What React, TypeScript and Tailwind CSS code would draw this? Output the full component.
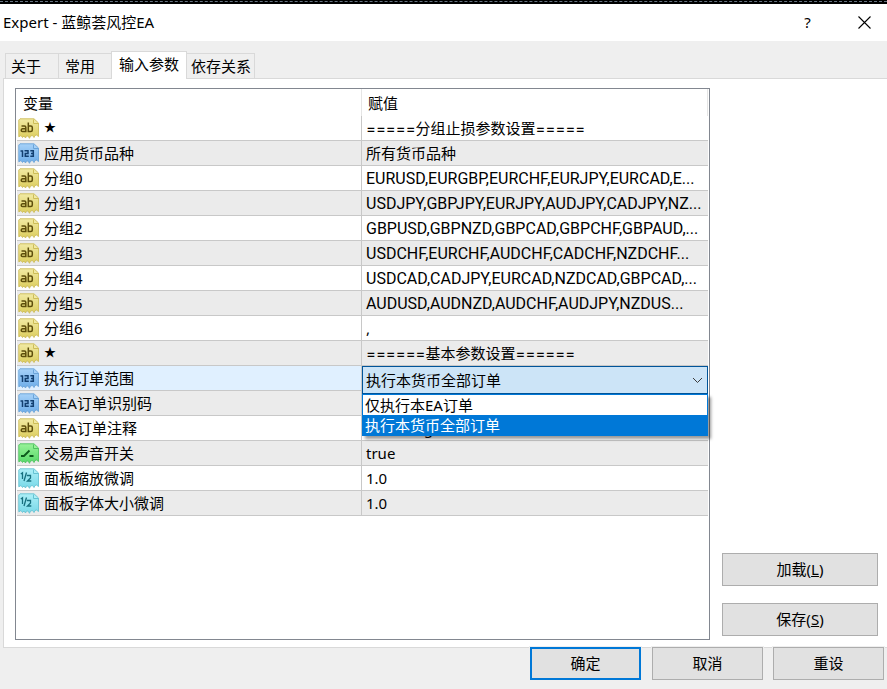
import { useState } from "react";

type Kind = "text" | "int" | "bool" | "real";

interface Param {
  kind: Kind;
  name: string;
  value: string;
}

const params: Param[] = [
  { kind: "text", name: "★", value: "=====分组止损参数设置=====" },
  { kind: "int", name: "应用货币品种", value: "所有货币品种" },
  { kind: "text", name: "分组0", value: "EURUSD,EURGBP,EURCHF,EURJPY,EURCAD,E..." },
  { kind: "text", name: "分组1", value: "USDJPY,GBPJPY,EURJPY,AUDJPY,CADJPY,NZ..." },
  { kind: "text", name: "分组2", value: "GBPUSD,GBPNZD,GBPCAD,GBPCHF,GBPAUD,..." },
  { kind: "text", name: "分组3", value: "USDCHF,EURCHF,AUDCHF,CADCHF,NZDCHF..." },
  { kind: "text", name: "分组4", value: "USDCAD,CADJPY,EURCAD,NZDCAD,GBPCAD,..." },
  { kind: "text", name: "分组5", value: "AUDUSD,AUDNZD,AUDCHF,AUDJPY,NZDUS..." },
  { kind: "text", name: "分组6", value: "," },
  { kind: "text", name: "★", value: "======基本参数设置======" },
  { kind: "int", name: "执行订单范围", value: "执行本货币全部订单" },
  { kind: "int", name: "本EA订单识别码", value: "" },
  { kind: "text", name: "本EA订单注释", value: "Blue King" },
  { kind: "bool", name: "交易声音开关", value: "true" },
  { kind: "real", name: "面板缩放微调", value: "1.0" },
  { kind: "real", name: "面板字体大小微调", value: "1.0" },
];

const scopes = ["仅执行本EA订单", "执行本货币全部订单"];

const palette: Record<Kind, { top: string; base: string; edge: string; ink: string }> = {
  text: { top: "#f1eaa4", base: "#dccd5c", edge: "#cdbc58", ink: "#5d4e0c" },
  int: { top: "#a6d1f8", base: "#6cace8", edge: "#6ba4d8", ink: "#123f70" },
  bool: { top: "#98f298", base: "#55d868", edge: "#4fc260", ink: "#0c5a1c" },
  real: { top: "#adeff7", base: "#77d8e8", edge: "#66c2d2", ink: "#17707f" },
};

function TypeIcon({ kind }: { kind: Kind }) {
  const c = palette[kind];
  return (
    <svg width="21" height="21" viewBox="0 0 21 21" className="block shrink-0" aria-hidden="true">
      <defs>
        <linearGradient id={`fill-${kind}`} x1="0" y1="0" x2="0" y2="1">
          <stop offset="0" stopColor={c.top} />
          <stop offset="1" stopColor={c.base} />
        </linearGradient>
      </defs>
      <path
        d="M2 .8H16L20.500 5V18.500L18.500 17L17 17.500L16 19.500L14.500 17.500L12.500 18L11.500 20.300L10 18L8.500 18L7.500 20L6 18L4.500 19.500L3 17.500L.8 18.800V2Z"
        fill={`url(#fill-${kind})`}
        stroke={c.edge}
        strokeWidth=".9"
      />
      <path d="M15.500 1.500V5.500H20" fill={c.top} stroke={c.edge} />
      {kind === "text" && (
        <g fill="none" stroke={c.ink} strokeWidth="1.500">
          <path d="M3.500 8H6.500Q7.800 8 7.800 9.200V13.500H4.500Q3.200 13.500 3.200 12.200T4.500 10.700H7.800" />
          <path d="M10.300 4.500V13.500H12.800Q14.300 13.500 14.300 12V9.500Q14.300 8 12.800 8H10.300" />
        </g>
      )}
      {kind === "int" && (
        <g fill="none" stroke={c.ink} strokeWidth="1.500">
          <path d="M2.500 8H4.500V14" />
          <path d="M6.500 7.800H10V10.500H7.300V13.300H10.800" />
          <path d="M12.300 7.800H15.300V13.300H12.300M13 10.500H15.300" />
        </g>
      )}
      {kind === "bool" && <path d="M3 13H6L11.500 7.500M11.500 13H15.500" fill="none" stroke={c.ink} strokeWidth="1.800" />}
      {kind === "real" && (
        <g fill="none" stroke={c.ink} strokeWidth="1.300">
          <path d="M2.800 6L4.500 4.800V11M8.500 4.500L6 13" />
          <path d="M8.800 7.500H12.500V10L9.500 13H13.300" />
        </g>
      )}
    </svg>
  );
}

function ScopeBox() {
  const [scope, setScope] = useState(scopes[1]);
  return (
    <div className="absolute inset-x-0 top-0 z-10">
      <div className="relative">
        <select
          aria-label="执行订单范围"
          value={scope}
          onChange={(e) => setScope(e.target.value)}
          className="block h-7 w-full appearance-none border border-[#005499] bg-[#cce4f7] pl-[3px] outline-none"
        >
          {scopes.map((s) => (
            <option key={s}>{s}</option>
          ))}
        </select>
        <svg width="11" height="7" viewBox="0 0 11 7" className="pointer-events-none absolute top-[11px] right-[5px]" aria-hidden="true">
          <path d="M1 1L5.500 5.500L10 1" fill="none" stroke="#3c3c3c" />
        </svg>
      </div>
      <ul role="listbox" aria-label="执行订单范围" className="border border-[#0078d7] bg-white shadow-[3px_3px_3px_rgba(0,0,0,0.4)]">
        {scopes.map((s) => (
          <li
            key={s}
            role="option"
            aria-selected={s === scope}
            onClick={() => setScope(s)}
            className="h-5 pl-0.5 leading-5 aria-selected:bg-[#0078d7] aria-selected:text-white"
          >
            {s}
          </li>
        ))}
      </ul>
    </div>
  );
}

function valueFont(value: string) {
  if (value.startsWith("=")) return "font-['Inter','Noto_Sans_CJK_SC',sans-serif] leading-[26px]";
  if (value.includes("...")) return "font-['Roboto',sans-serif] text-base leading-[26px]";
  return "leading-6";
}

function Row({ param, index }: { param: Param; index: number }) {
  const active = index === 10;
  const shade = index % 2 === 1 ? "bg-[#ebebeb]" : "bg-white";
  return (
    <tr className={shade}>
      <td className={`h-[25px] border-r border-b border-[#c8c8c8] p-0 ${active ? "bg-[#e0f0ff]" : ""}`}>
        <div className="flex h-6 items-center gap-[5px] pl-px">
          <TypeIcon kind={param.kind} />
          <span className={param.name === "★" ? "text-xs" : ""}>{param.name}</span>
        </div>
      </td>
      <td className="relative border-b border-[#c8c8c8] p-0">
        {active ? (
          <ScopeBox />
        ) : (
          <div className={`h-6 overflow-hidden pl-1 whitespace-nowrap ${valueFont(param.value)}`}>{param.value}</div>
        )}
      </td>
    </tr>
  );
}

const tabs = ["关于", "常用", "输入参数", "依存关系"];
const button = "h-[33px] border border-[#adadad] bg-[#e1e1e1] pb-0.5";

export default function App() {
  return (
    <div className="flex min-h-screen flex-col bg-[#efefef] font-['Noto_Sans','Noto_Sans_CJK_SC',sans-serif] text-[15px] leading-6 text-black">
      <div className="h-1 bg-black pt-px">
        <div className="border-t border-dashed border-[#687482]" />
      </div>
      <header className="flex h-[37px] items-center bg-white pb-0.5 pl-[3px]">
        <h1 className="flex-1">Expert - 蓝鲸荟风控EA</h1>
        <button aria-label="帮助" className="h-full w-[57px] pl-3">?</button>
        <button aria-label="关闭" className="flex h-full w-[57px] items-center justify-center pt-0.5 pl-3">
          <svg width="13" height="13" viewBox="0 0 13 13" aria-hidden="true">
            <path d="M.5 .5L12.500 12.500M12.500 .5L.5 12.500" stroke="#000" strokeWidth="1.100" />
          </svg>
        </button>
      </header>

      <nav role="tablist" className="z-10 -mb-px flex h-[38px] items-end pl-[5px]">
        {tabs.map((t, i) => (
          <button
            key={t}
            role="tab"
            aria-selected={i === 2}
            className={
              i === 2
                ? "h-7 w-[76px] border border-b-0 border-[#d9d9d9] bg-white pb-1"
                : `h-[26px] border border-[#d9d9d9] text-left ${i === 0 ? "w-[53px] border-r-0 pl-[5px]" : i === 1 ? "w-[53px] border-r-0 pl-[6px]" : "w-[68px] border-l-0 pl-1"}`
            }
          >
            {t}
          </button>
        ))}
      </nav>

      <main className="ml-[3px] flex flex-1 gap-3 border-t border-l border-[#d9d9d9] bg-white pt-[9px] pr-[9px] pb-[7px] pl-[11px]">
        <section className="min-w-0 flex-1 border border-[#828790] px-px">
          <table className="w-full table-fixed border-separate border-spacing-0">
            <colgroup>
              <col />
              <col className="w-[346px]" />
            </colgroup>
            <thead>
              <tr>
                <th className="h-[27px] border-r border-[#e5e5e5] p-0 pl-[6px] text-left font-normal">变量</th>
                <th className="border-r border-[#e5e5e5] p-0 pl-[6px] text-left font-normal">赋值</th>
              </tr>
            </thead>
            <tbody>
              {params.map((p, i) => (
                <Row key={i} param={p} index={i} />
              ))}
            </tbody>
          </table>
        </section>
        <aside className="flex w-[156px] flex-col justify-end gap-[17px] pb-1">
          <button className={button}>加载(<u>L</u>)</button>
          <button className={button}>保存(<u>S</u>)</button>
        </aside>
      </main>

      <footer className="ml-[3px] flex h-[42px] items-start justify-end gap-[10px] pr-[3px] shadow-[inset_0_1px_0_#d9d9d9]">
        <button className="mr-px h-[33px] w-[111px] border-2 border-[#0078d7] bg-[#e1e1e1] pb-0.5 ring-1 ring-[#efefef]">确定</button>
        <button className={`${button} w-[111px] ring-1 ring-[#efefef]`}>取消</button>
        <button className={`${button} w-[111px] ring-1 ring-[#efefef]`}>重设</button>
      </footer>
    </div>
  );
}
